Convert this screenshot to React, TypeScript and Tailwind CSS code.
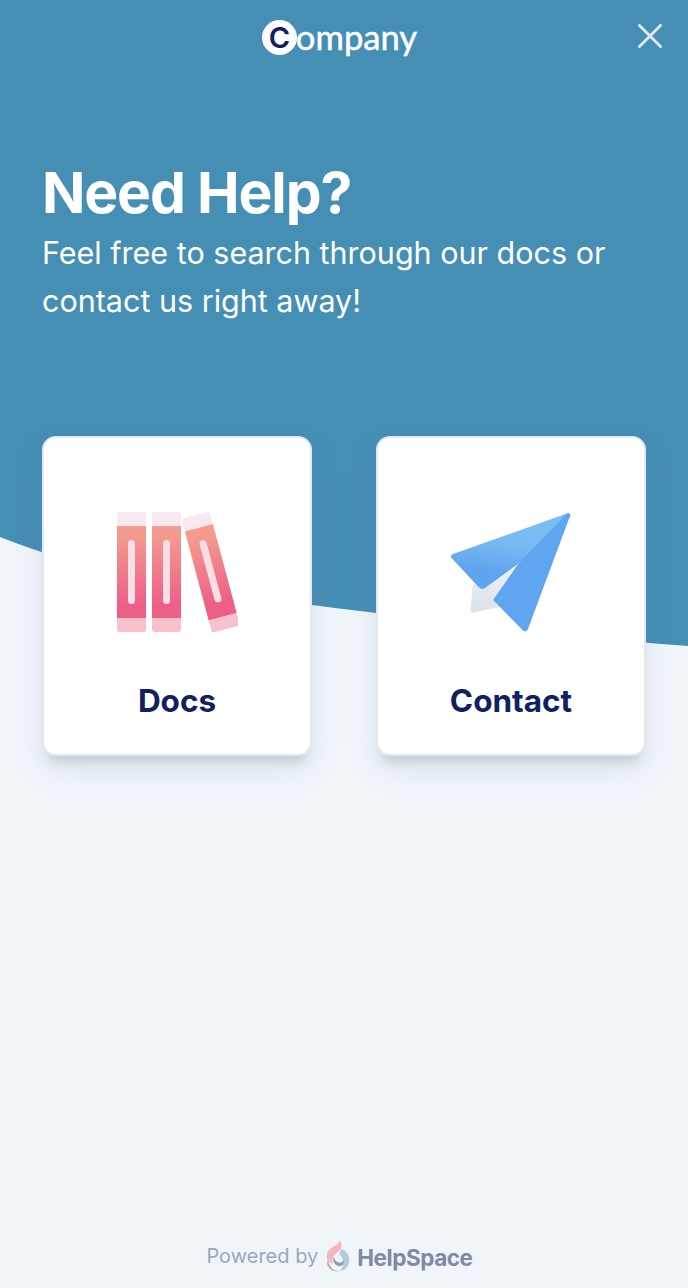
import React from "react";

function Books() {
  return (
    <svg width="122" height="122" viewBox="0 0 122 122" className="block">
      <defs>
        <linearGradient id="bk" x1="0" y1="0" x2="0" y2="1">
          <stop offset="0" stopColor="#f39c90" />
          <stop offset="0.12" stopColor="#f39a8f" />
          <stop offset="0.85" stopColor="#ee5f88" />
          <stop offset="1" stopColor="#ee5f88" />
        </linearGradient>
      </defs>
      {[0, 35].map((x) => (
        <g key={x} transform={`translate(${x} 0)`}>
          <path d="M1 15V4a3 3 0 0 1 3-3h23a3 3 0 0 1 3 3v11z" fill="#f8e8f0" />
          <rect x="1" y="15" width="29" height="92" fill="url(#bk)" />
          <path d="M1 107h29v11.500a2.500 2.500 0 0 1-2.500 2.500H3.500A2.500 2.500 0 0 1 1 118.500z" fill="#f7c2ce" />
          <rect x="12" y="29" width="7" height="64" rx="3.500" fill="#f9dfe5" />
        </g>
      ))}
      <g transform="translate(65.500 8) rotate(-15 0 0)">
        <path d="M0 13V3a3 3 0 0 1 3-3h23a3 3 0 0 1 3 3v10z" fill="#f8e8f0" />
        <rect x="0" y="13" width="29" height="92" fill="url(#bk)" />
        <path d="M0 105h29v10.500a2.500 2.500 0 0 1-2.500 2.500H2.500A2.500 2.500 0 0 1 0 115.500z" fill="#f7c2ce" />
        <rect x="11" y="26" width="7" height="64" rx="3.500" fill="#f9dfe5" />
      </g>
    </svg>
  );
}

function Plane() {
  return (
    <svg width="122" height="122" viewBox="0 0 122 122" className="block">
      <defs>
        <linearGradient id="pl1" x1="0.6" y1="0.2" x2="0.45" y2="0.8">
          <stop offset="0" stopColor="#7abdf3" />
          <stop offset="0.4" stopColor="#78b9f2" />
          <stop offset="1" stopColor="#5fa4ee" />
        </linearGradient>
        <linearGradient id="pl2" x1="0.5" y1="0.5" x2="0.75" y2="1">
          <stop offset="0" stopColor="#5fa5f0" />
          <stop offset="0.7" stopColor="#5fa5f0" />
          <stop offset="1" stopColor="#4f8cc8" />
        </linearGradient>
        <linearGradient id="pl3" x1="0.9" y1="0" x2="0.2" y2="1">
          <stop offset="0" stopColor="#f0f3f8" />
          <stop offset="1" stopColor="#dbe3ea" />
        </linearGradient>
      </defs>
      <path d="M24 72 L33 78 L69 53 L44 89 L51 96 L24 101.500 Q21.500 102 21.500 99 Z" fill="url(#pl3)" />
      <path d="M3.500 48 Q0 45 4 43 L118 2.500 Q122 1.500 121 6 L69 53 L36 77 Q33 79 30 76.500 Z" fill="url(#pl1)" />
      <path d="M121 5 Q122 1.500 118 2.500 L69 53 L44 89 L74 119.500 Q77 122 79 118 Z" fill="url(#pl2)" />
    </svg>
  );
}

function Flame() {
  return (
    <svg width="24" height="32" viewBox="0 0 26 32" className="block" preserveAspectRatio="none">
      <path d="M15 0 C18 5 17 9 13 12 C8 15 6 19 8 24 L3 22 C0 18 0 14 3 10 C7 6 13 6 15 0 Z" fill="#f5b7bb" />
      <path d="M17 9 C23 11 26 16 25 22 C24 28 19 31 15 31 C19 27 21 20 15 15 C14 13 15 11 17 9 Z" fill="#b3cddf" />
      <path d="M2 20 C4 28 9 31 15 31 C11 32 5 31 2 26 C1 24 1 22 2 20 Z" fill="#c8a6b4" />
      <path d="M8 17 C7 22 11 27 16 26 C19 25 20 22 19 20 C17 24 11 24 8 17 Z" fill="#8d9bb0" />
    </svg>
  );
}

function Card({ label, children }: { label: string; children: React.ReactNode }) {
  return (
    <div className="w-[270px] h-[320px] flex flex-col items-center bg-white rounded-[14px] border-2 border-[#e2e8f0] shadow-[0_12px_8px_-6px_rgba(120,140,165,0.26),0_14px_28px_rgba(120,140,165,0.16)] pt-[73px]">
      {children}
      <div className="mt-[50px] text-[31.5px] leading-[36px] font-bold text-[#0f2160]">{label}</div>
    </div>
  );
}

export default function App() {
  return (
    <div
      className="relative w-[688px] h-[1288px] overflow-hidden bg-[#f0f5fa] flex flex-col"
      style={{ fontFamily: "Inter, 'Liberation Sans', sans-serif" }}
    >
      <svg className="absolute top-0 left-0" width="688" height="660" viewBox="0 0 688 660">
        <path d="M0 0H688V646C600 640 480 626 376 613C270 600 120 585 0 537Z" fill="#458eb4" />
      </svg>

      <header className="relative h-[74px] flex items-center justify-center">
        <div className="flex items-center ml-[-9px] text-white">
          <div className="w-[35px] h-[35px] rounded-full bg-white flex items-center justify-center text-[#0f2160] text-[29px] leading-none font-semibold">
            C
          </div>
          <span
            className="text-[34.6px] leading-none ml-[-1px] mt-[1px] [-webkit-text-stroke:0.5px_white]"
            style={{ fontFamily: "Lato, sans-serif" }}
          >
            ompany
          </span>
        </div>
        <button className="absolute right-[26px] top-[24px] text-[#dde6ec]">
          <svg width="24" height="24" viewBox="0 0 24 24" fill="none" stroke="currentColor" strokeWidth="3" strokeLinecap="round">
            <path d="M1.500 1.500L22.500 22.500M22.500 1.500L1.500 22.500" />
          </svg>
        </button>
      </header>

      <main className="relative px-[42px] pt-[84px] text-white">
        <h1 className="text-[57px] leading-[70px] font-bold tracking-[-1.14px]">Need Help?</h1>
        <p className="mt-[1px] text-[30.5px] leading-[48px] w-[600px]">
          Feel free to search through our docs or contact us right away!
        </p>
      </main>

      <section className="relative mt-[111px] px-[42px] flex justify-between w-[688px]">
        <Card label="Docs">
          <Books />
        </Card>
        <Card label="Contact">
          <div className="ml-[-2px]"><Plane /></div>
        </Card>
      </section>

      <footer className="relative mt-auto h-[64px] pr-[9px] flex items-center justify-center text-[#9aa8bf] text-[20px] leading-[24px]">
        <span>Powered by</span>
        <span className="ml-[8px] mr-[7px]"><Flame /></span>
        <span className="font-bold text-[#7f8aa5] text-[22.5px] leading-[30px] tracking-[-0.45px] mt-[3px]">HelpSpace</span>
      </footer>
    </div>
  );
}
